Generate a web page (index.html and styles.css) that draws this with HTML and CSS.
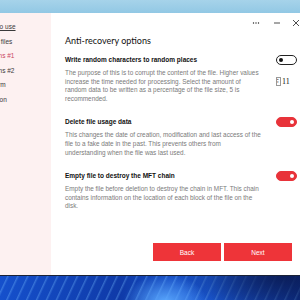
FILE: index.html
```html
<!DOCTYPE html>
<html lang="en">
<head>
    <meta charset="UTF-8">
    <title>Anti-recovery options</title>
    <link rel="stylesheet" href="styles.css">
</head>
<body>
<div class="desktop-top"></div>

<div class="window">
    <div class="sidebar">
        <ul class="steps">
            <li class="step step-link">How to use</li>
            <li class="step">Open files</li>
            <li class="step active">Options #1</li>
            <li class="step">Options #2</li>
            <li class="step">Confirm</li>
            <li class="step">Deletion</li>
        </ul>
    </div>

    <div class="main">
        <div class="title-controls">
            <svg class="ctl ctl-more" width="8" height="8" viewBox="0 0 8 8"><circle cx="1.5" cy="4" r="0.7"/><circle cx="4" cy="4" r="0.7"/><circle cx="6.5" cy="4" r="0.7"/></svg>
            <svg class="ctl ctl-min" width="8" height="8" viewBox="0 0 8 8"><path d="M1 4h6"/></svg>
            <svg class="ctl ctl-close" width="8" height="8" viewBox="0 0 8 8"><path d="M1 1l6 6M7 1l-6 6"/></svg>
        </div>

        <h1 class="page-title">Anti-recovery options</h1>

        <div class="option">
            <h2 class="option-title">Write random characters to random places</h2>
            <span class="toggle"></span>
            <p class="option-desc">The purpose of this is to corrupt the content of the file. Higher values increase the time needed for processing. Select the amount of random data to be written as a percentage of the file size, 5 is recommended.</p>
            <div class="spin">
                <span class="spin-arrows"><i>&#9652;</i><i>&#9662;</i></span>
                <span class="spin-value">11</span>
            </div>
        </div>

        <div class="option">
            <h2 class="option-title">Delete file usage data</h2>
            <span class="toggle on"></span>
            <p class="option-desc">This changes the date of creation, modification and last access of the file to a fake date in the past. This prevents others from understanding when the file was last used.</p>
        </div>

        <div class="option">
            <h2 class="option-title">Empty file to destroy the MFT chain</h2>
            <span class="toggle on"></span>
            <p class="option-desc">Empty the file before deletion to destroy the chain in MFT. This chain contains information on the location of each block of the file on the disk.</p>
        </div>

        <div class="actions">
            <button class="btn">Back</button>
            <button class="btn">Next</button>
        </div>
    </div>
</div>

<div class="wallpaper"></div>
</body>
</html>
```

FILE: styles.css
```css
body {
    margin: 0;
    width: 300px;
    height: 300px;
    overflow: hidden;
    display: flex;
    flex-direction: column;
    font-family: 'Liberation Sans', Arial, sans-serif;
    color: #222;
}

.desktop-top {
    height: 13px;
    background: linear-gradient(180deg, #a6d3ea, #92c8e4);
}

.window {
    height: 262px;
    display: flex;
    background-color: #fff;
}

.sidebar {
    width: 51px;
    background-color: #fdf1f1;
    overflow: hidden;
}

.steps {
    list-style: none;
    margin: 0 0 0 -17px;
    padding: 7px 0 0 0;
    white-space: nowrap;
}

.step {
    height: 14.5px;
    line-height: 14.5px;
    font-size: 6.5px;
    color: #3a3a3a;
}

.step-link {
    text-decoration: underline;
}

.step.active {
    color: #c9465e;
}

.main {
    flex: 1;
    display: flex;
    flex-direction: column;
    padding: 0 3px 14px 14px;
}

.title-controls {
    height: 18px;
    padding-top: 1px;
    display: flex;
    justify-content: flex-end;
    align-items: center;
    margin-right: -3px;
}

.ctl {
    fill: #222;
    stroke: #222;
    stroke-width: 0.8;
}

.ctl-more {
    stroke: none;
}

.ctl-min {
    margin-left: 13px;
}

.ctl-close {
    margin-left: 11px;
}

.page-title {
    margin: 2px 0 0 0;
    font-family: Lato, sans-serif;
    font-weight: 400;
    font-size: 9px;
    line-height: 14px;
    color: #111;
}

.option {
    display: grid;
    grid-template-columns: 1fr 21px;
    column-gap: 6px;
    margin-top: 7px;
}

.option + .option {
    margin-top: 14px;
}

.option-title {
    margin: 0;
    font-size: 6.5px;
    font-weight: 700;
    line-height: 10px;
    color: #111;
}

.option-desc {
    margin: 4px 0 0 0;
    max-width: 196px;
    font-size: 6.4px;
    line-height: 8.6px;
    color: #7a7a7a;
}

.toggle {
    align-self: center;
    width: 19px;
    height: 8px;
    border: 1px solid #222;
    border-radius: 5px;
    background-color: #fff;
    position: relative;
}

.toggle::after {
    content: "";
    position: absolute;
    left: 2px;
    top: 2px;
    width: 4px;
    height: 4px;
    border-radius: 50%;
    background-color: #111;
}

.toggle.on {
    border-color: #e8333a;
    background-color: #e8333a;
}

.toggle.on::after {
    left: auto;
    right: 2px;
    background-color: #fff;
}

.spin {
    display: flex;
    align-items: center;
    gap: 1px;
    margin-top: 12px;
    align-self: start;
    height: 8px;
}

.spin-arrows {
    display: flex;
    flex-direction: column;
    width: 3px;
    height: 7px;
    border: 1px solid #999;
    font-size: 3px;
    line-height: 3.5px;
    color: #444;
}

.spin-arrows i {
    font-style: normal;
}

.spin-value {
    font-family: 'Liberation Serif', serif;
    font-size: 8px;
    color: #111;
}

.actions {
    margin-top: auto;
    display: flex;
    justify-content: flex-end;
    gap: 3px;
    margin-right: 5px;
}

.btn {
    width: 68px;
    height: 18px;
    border: none;
    background-color: #ee3439;
    color: #fff;
    font-family: 'Liberation Sans', Arial, sans-serif;
    font-size: 6.5px;
}

.wallpaper {
    flex: 1;
    border-top: 1px solid #1a2236;
    background:
        radial-gradient(ellipse 60px 40px at 55% 110%, #5aa8ff 0, transparent 70%),
        radial-gradient(ellipse 160px 60px at 95% 0%, #0b1e5a 0, transparent 70%),
        repeating-linear-gradient(115deg, rgba(255,255,255,0) 0 6px, rgba(120,190,255,0.35) 7px, rgba(255,255,255,0) 9px),
        linear-gradient(90deg, #1550cc, #0f3aa8 40%, #1a5ad8 70%, #0d2f8a);
}
```
